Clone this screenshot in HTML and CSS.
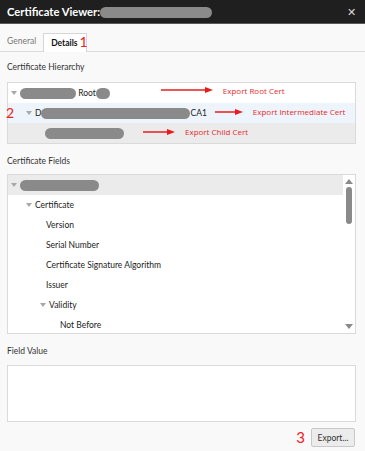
FILE: index.html
```html
<!DOCTYPE html>
<html lang="en">

<head>
    <meta charset="UTF-8" />
    <title>Certificate Viewer</title>
    <link rel="stylesheet" href="styles.css">
</head>

<body>
    <div class="titlebar">
        <span class="title">Certificate Viewer:</span>
        <span class="blur title-blur"></span>
        <span class="close">&#x2715;</span>
    </div>

    <div class="tabs">
        <span class="tab">General</span>
        <span class="tab active">Details</span>
        <span class="mark mark-tab">1</span>
    </div>

    <div class="label">Certificate Hierarchy</div>
    <div class="box hierarchy">
        <div class="row">
            <span class="twisty"></span>
            <span class="blur" style="width: 56px"></span>
            <span class="txt">&nbsp;Root</span>
            <span class="blur" style="width: 14px"></span>
            <span class="note note-first" style="margin-left: 51px">
                <svg class="arrow" width="52" height="6" viewBox="0 0 52 6"><line x1="0" y1="3" x2="44" y2="3" /><polygon points="44,0 52,3 44,6" /></svg>
                <span class="note-text">Export Root Cert</span>
            </span>
        </div>
        <div class="row hover">
            <span class="mark mark-row">2</span>
            <span class="twisty" style="margin-left: 12px"></span>
            <span class="txt">D</span>
            <span class="blur" style="width: 149px"></span>
            <span class="txt">CA1</span>
            <span class="note" style="margin-left: 8px">
                <svg class="arrow" width="28" height="6" viewBox="0 0 28 6"><line x1="0" y1="3" x2="20" y2="3" /><polygon points="20,0 28,3 20,6" /></svg>
                <span class="note-text">Export Intermediate Cert</span>
            </span>
        </div>
        <div class="row selected">
            <span class="blur" style="width: 79px; margin-left: 37px"></span>
            <span class="note" style="margin-left: 19px">
                <svg class="arrow" width="32" height="6" viewBox="0 0 32 6"><line x1="0" y1="3" x2="24" y2="3" /><polygon points="24,0 32,3 24,6" /></svg>
                <span class="note-text">Export Child Cert</span>
            </span>
        </div>
    </div>

    <div class="label label-fields">Certificate Fields</div>
    <div class="box fields">
        <div class="tree">
            <div class="row selected">
                <span class="twisty"></span>
                <span class="blur" style="width: 79px"></span>
            </div>
            <div class="row lvl1"><span class="twisty"></span><span class="txt">Certificate</span></div>
            <div class="row lvl2"><span class="txt">Version</span></div>
            <div class="row lvl2"><span class="txt">Serial Number</span></div>
            <div class="row lvl2"><span class="txt">Certificate Signature Algorithm</span></div>
            <div class="row lvl2"><span class="txt">Issuer</span></div>
            <div class="row lvl2b"><span class="twisty"></span><span class="txt">Validity</span></div>
            <div class="row lvl3"><span class="txt">Not Before</span></div>
        </div>
        <div class="scrollbar">
            <span class="sb-up"></span>
            <span class="sb-thumb"></span>
            <span class="sb-down"></span>
        </div>
    </div>

    <div class="label label-value">Field Value</div>
    <div class="box value"></div>

    <div class="actions">
        <span class="mark mark-btn">3</span>
        <button class="export">Export...</button>
    </div>
</body>

</html>
```

FILE: styles.css
```css
* {
    box-sizing: border-box;
    margin: 0;
    padding: 0;
}

body {
    width: 365px;
    height: 451px;
    overflow: hidden;
    background: #f9f9f9;
    font-family: Lato, 'Open Sans', sans-serif;
    font-size: 8.5px;
    color: #222;
}

.titlebar {
    height: 24px;
    background: #1f1f1f;
    border-bottom: 1px solid #5a5a5a;
    display: flex;
    align-items: center;
    padding-left: 7px;
    padding-right: 9px;
}

.title {
    color: #fff;
    font-size: 11.2px;
    font-weight: 700;
}

.title-blur {
    width: 112px;
    height: 16px;
    margin-top: 2px;
    border-radius: 8px;
    background: #8c8c8c;
}

.close {
    margin-left: auto;
    color: #d8d8d8;
    font-size: 11px;
}

.blur {
    display: inline-block;
    height: 11px;
    border-radius: 6px;
    background: #8a8a8a;
}

.tabs {
    height: 28px;
    display: flex;
    align-items: flex-end;
    border-bottom: 1px solid #dcdcdc;
}

.tab {
    height: 19px;
    line-height: 18px;
    padding: 0 7px;
    color: #777;
}

.tab.active {
    background: #fff;
    border: 1px solid #d6d6d6;
    border-bottom: none;
    margin-bottom: -1px;
    padding: 0 8px 0 7px;
    color: #111;
    font-weight: 700;
}

.mark {
    color: #f02020;
    font-size: 14px;
    line-height: 1;
}

.mark-tab {
    margin-left: -7px;
    margin-bottom: 2px;
}

.label {
    margin: 8px 7px 0;
    height: 14px;
    line-height: 14px;
    color: #333;
}

.label-fields {
    margin-top: 10px;
}

.label-value {
    margin-top: 10px;
}

.box {
    margin: 8px 9px 0 7px;
    background: #fff;
    border: 1px solid #dadada;
}

.row {
    height: 20px;
    display: flex;
    align-items: center;
    white-space: nowrap;
}

.row.hover {
    background: #eef4fb;
}

.row.selected {
    background: #ebebeb;
}

.twisty {
    width: 0;
    height: 0;
    margin: 0 3px;
    border-left: 3px solid transparent;
    border-right: 3px solid transparent;
    border-top: 4px solid #a8a8a8;
}

.mark-row {
    margin-left: -2px;
    width: 8px;
}

.note {
    display: flex;
    align-items: center;
    margin-bottom: 3px;
}

.note-first {
    margin-bottom: 6px;
}

.arrow line {
    stroke: #e81c1c;
    stroke-width: 1.5;
}

.arrow polygon {
    fill: #e81c1c;
}

.note-text {
    margin-left: 10px;
    color: #e82a2a;
    font-family: 'Open Sans', sans-serif;
    font-size: 8px;
}

.fields {
    height: 160px;
    display: flex;
    overflow: hidden;
    margin-top: 6px;
}

.tree {
    flex: 1;
}

.lvl1 {
    padding-left: 15px;
}

.lvl2 {
    padding-left: 38px;
}

.lvl2b {
    padding-left: 29px;
}

.lvl3 {
    padding-left: 52px;
}

.scrollbar {
    width: 12px;
    display: flex;
    flex-direction: column;
    align-items: center;
    padding: 4px 0;
}

.sb-up,
.sb-down {
    width: 0;
    height: 0;
    border-left: 4px solid transparent;
    border-right: 4px solid transparent;
}

.sb-up {
    border-bottom: 5px solid #8a8a8a;
}

.sb-down {
    margin-top: auto;
    border-top: 5px solid #8a8a8a;
}

.sb-thumb {
    margin-top: 3px;
    width: 6px;
    height: 37px;
    border-radius: 3px;
    background: #8a8a8a;
}

.value {
    height: 57px;
    margin-top: 7px;
}

.actions {
    display: flex;
    justify-content: flex-end;
    align-items: center;
    margin: 6px 10px 0 0;
    gap: 6px;
}

.mark-btn {
    font-size: 15px;
}

.export {
    width: 44px;
    height: 19px;
    font-family: inherit;
    font-size: 8.5px;
    color: #333;
    background: #ececec;
    border: 1px solid #c8c8c8;
    border-radius: 2px;
}
```
